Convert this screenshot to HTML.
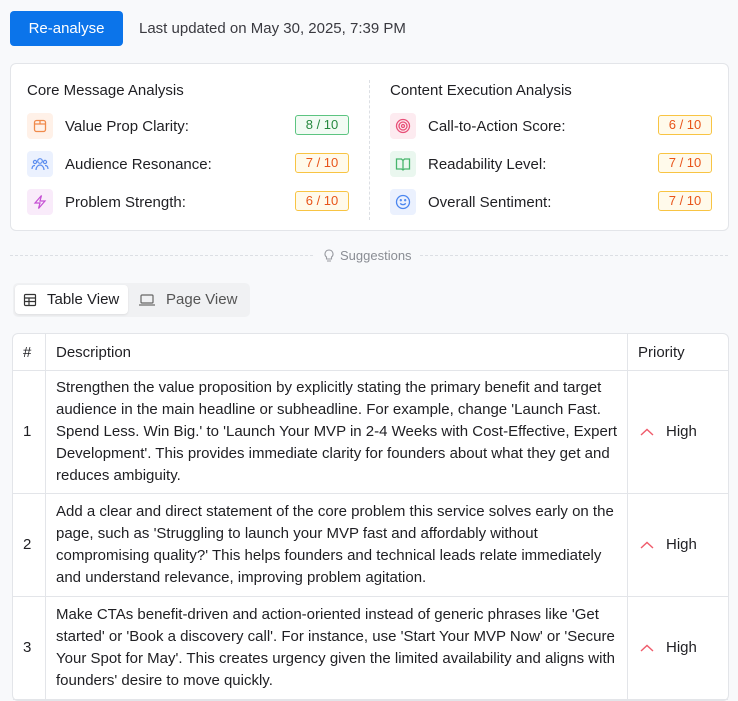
<!DOCTYPE html>
<html><head><style>
*{box-sizing:border-box;margin:0;padding:0}
body{width:738px;height:695px;overflow:hidden;background:#f8f9fb;font-family:"Liberation Sans",sans-serif;color:#1f1f23;position:relative}
.btn{position:absolute;left:10px;top:11px;width:113px;height:35px;background:#0b74ea;border-radius:4px;color:#fff;font-size:15px;text-align:center;line-height:35px}
.upd{position:absolute;left:139px;top:20px;font-size:15px;color:#3a3a40}
.card{position:absolute;left:10px;top:63px;width:719px;height:168px;background:#fff;border:1px solid #e3e5e9;border-radius:6px}
.vd{position:absolute;left:358px;top:16px;height:140px;border-left:1px dashed #dcdfe4}
.col{position:absolute;top:18px}
.col h3{font-size:15px;font-weight:normal;color:#1f1f23;margin-bottom:8px}
.row{position:relative;height:38px;display:flex;align-items:center}
.ic{width:26px;height:26px;border-radius:4px;display:flex;align-items:center;justify-content:center;margin-right:12px}
.lbl{font-size:15px}
.b{position:absolute;right:0;top:8px;width:54px;height:20px;border:1px solid;border-radius:3px;font-size:13px;text-align:center;line-height:18px}
.g{border-color:#5cc481;color:#26883f;background:#f2fbf4}
.o{border-color:#f8c443;color:#e8541a;background:#fffaeb}
.sug{position:absolute;left:10px;right:10px;top:255px;border-top:1px dashed #dcdfe4}
.sugt{position:absolute;left:315px;top:248px;background:#f8f9fb;padding:0 8px;font-size:13px;color:#8a8d94;display:flex;align-items:center;gap:5px}
.tabs{position:absolute;left:13px;top:283px;width:237px;height:34px;background:#f0f1f3;border-radius:5px}
.tab{position:absolute;top:2px;height:29px;display:flex;align-items:center;font-size:15px;gap:10px}
.t1{left:2px;width:113px;background:#fff;border-radius:4px;padding-left:8px;box-shadow:0 1px 2px rgba(0,0,0,.08)}
.t2{left:125px;color:#555}
table{position:absolute;left:12px;top:333px;width:717px;border-collapse:separate;border-spacing:0;background:#fff;border:1px solid #e3e5e9;border-radius:6px;font-size:15px}
td,th{border-bottom:1px solid #e3e5e9;border-right:1px solid #e3e5e9;text-align:left;vertical-align:middle;line-height:22px}
th{font-weight:normal;height:37px;padding:1px 10px 0}
td{padding:5px 10px 6px}
td.d{padding-right:6px}
tr>*:last-child{border-right:none}
.p{display:flex;align-items:center;gap:12px;padding-left:2px}
</style></head><body>
<div class="btn">Re-analyse</div>
<div class="upd">Last updated on May 30, 2025, 7:39 PM</div>
<div class="card">
<div class="vd"></div>
<div class="col" style="left:16px;width:322px">
<h3>Core Message Analysis</h3>
<div class="row"><div class="ic" style="background:#fff1e8"><svg width="16" height="16" viewBox="0 0 16 16" fill="none" stroke="#f08a4b" stroke-width="1.3"><rect x="2.5" y="2.5" width="11" height="11" rx="2"/><path d="M2.5 6h11M8 2.5V6"/></svg></div><span class="lbl">Value Prop Clarity:</span><span class="b g">8 / 10</span></div>
<div class="row"><div class="ic" style="background:#ebf1fe"><svg width="18" height="16" viewBox="0 0 18 16" fill="none" stroke="#5b8def" stroke-width="1.2"><circle cx="9" cy="5" r="2.3"/><circle cx="4" cy="6" r="1.6"/><circle cx="14" cy="6" r="1.6"/><path d="M5 14c0-3 2-5 4-5s4 2 4 5M1 13c0-2 1-3.5 3-3.5M17 13c0-2-1-3.5-3-3.5"/></svg></div><span class="lbl">Audience Resonance:</span><span class="b o">7 / 10</span></div>
<div class="row"><div class="ic" style="background:#f9ebfa"><svg width="16" height="16" viewBox="0 0 16 16" fill="none" stroke="#c54ed3" stroke-width="1.2"><path d="M9.5 1.5L3 9h5l-1.5 5.5L13 7H8z"/></svg></div><span class="lbl">Problem Strength:</span><span class="b o">6 / 10</span></div>
</div>
<div class="col" style="left:379px;width:322px">
<h3>Content Execution Analysis</h3>
<div class="row"><div class="ic" style="background:#fdebf0"><svg width="16" height="16" viewBox="0 0 16 16" fill="none" stroke="#e84f78" stroke-width="1.3"><circle cx="8" cy="8" r="6.5"/><circle cx="8" cy="8" r="4"/><circle cx="8" cy="8" r="1.5"/></svg></div><span class="lbl">Call-to-Action Score:</span><span class="b o">6 / 10</span></div>
<div class="row"><div class="ic" style="background:#eaf7ef"><svg width="16" height="16" viewBox="0 0 16 16" fill="none" stroke="#47b56c" stroke-width="1.3"><path d="M1.5 3h5l1.5 1.5L9.5 3h5v10h-5L8 14l-1.5-1h-5zM8 4.5V14"/></svg></div><span class="lbl">Readability Level:</span><span class="b o">7 / 10</span></div>
<div class="row"><div class="ic" style="background:#ebf1fe"><svg width="16" height="16" viewBox="0 0 16 16" fill="none" stroke="#4b86ef" stroke-width="1.3"><circle cx="8" cy="8" r="6.5"/><path d="M5.3 9.3c1.4 1.8 4 1.8 5.4 0"/><circle cx="5.8" cy="6.2" r=".5"/><circle cx="10.2" cy="6.2" r=".5"/></svg></div><span class="lbl">Overall Sentiment:</span><span class="b o">7 / 10</span></div>
</div>
</div>
<div class="sug"></div>
<div class="sugt"><svg width="12" height="14" viewBox="0 0 12 14" fill="none" stroke="#9a9ca2" stroke-width="1.1"><path d="M6 1a4 4 0 0 0-2.5 7.1V10h5V8.1A4 4 0 0 0 6 1zM4 12h4"/></svg>Suggestions</div>
<div class="tabs">
<div class="tab t1"><svg width="14" height="14" viewBox="0 0 14 14" fill="none" stroke="#333" stroke-width="1.2"><rect x="1.5" y="1.5" width="11" height="11" rx="1"/><path d="M1.5 5h11M1.5 8.5h11M6 5v7.5"/></svg>Table View</div>
<div class="tab t2"><svg width="18" height="14" viewBox="0 0 18 14" fill="none" stroke="#666" stroke-width="1.2"><rect x="3" y="2" width="12" height="8" rx="1"/><path d="M1 12h16"/></svg>Page View</div>
</div>
<table>
<tr><th style="width:33px">#</th><th>Description</th><th style="width:100px">Priority</th></tr>
<tr><td style="height:123px">1</td><td class="d">Strengthen the value proposition by explicitly stating the primary benefit and target audience in the main headline or subheadline. For example, change 'Launch Fast. Spend Less. Win Big.' to 'Launch Your MVP in 2-4 Weeks with Cost-Effective, Expert Development'. This provides immediate clarity for founders about what they get and reduces ambiguity.</td><td><div class="p"><svg width="14" height="8" viewBox="0 0 14 8" fill="none" stroke="#ef5b6b" stroke-width="1.4"><path d="M1 7l6-5.5L13 7"/></svg>High</div></td></tr>
<tr><td style="height:103px">2</td><td class="d">Add a clear and direct statement of the core problem this service solves early on the page, such as 'Struggling to launch your MVP fast and affordably without compromising quality?' This helps founders and technical leads relate immediately and understand relevance, improving problem agitation.</td><td><div class="p"><svg width="14" height="8" viewBox="0 0 14 8" fill="none" stroke="#ef5b6b" stroke-width="1.4"><path d="M1 7l6-5.5L13 7"/></svg>High</div></td></tr>
<tr><td style="height:103px">3</td><td class="d">Make CTAs benefit-driven and action-oriented instead of generic phrases like 'Get started' or 'Book a discovery call'. For instance, use 'Start Your MVP Now' or 'Secure Your Spot for May'. This creates urgency given the limited availability and aligns with founders' desire to move quickly.</td><td><div class="p"><svg width="14" height="8" viewBox="0 0 14 8" fill="none" stroke="#ef5b6b" stroke-width="1.4"><path d="M1 7l6-5.5L13 7"/></svg>High</div></td></tr>
</table>
</body></html>
